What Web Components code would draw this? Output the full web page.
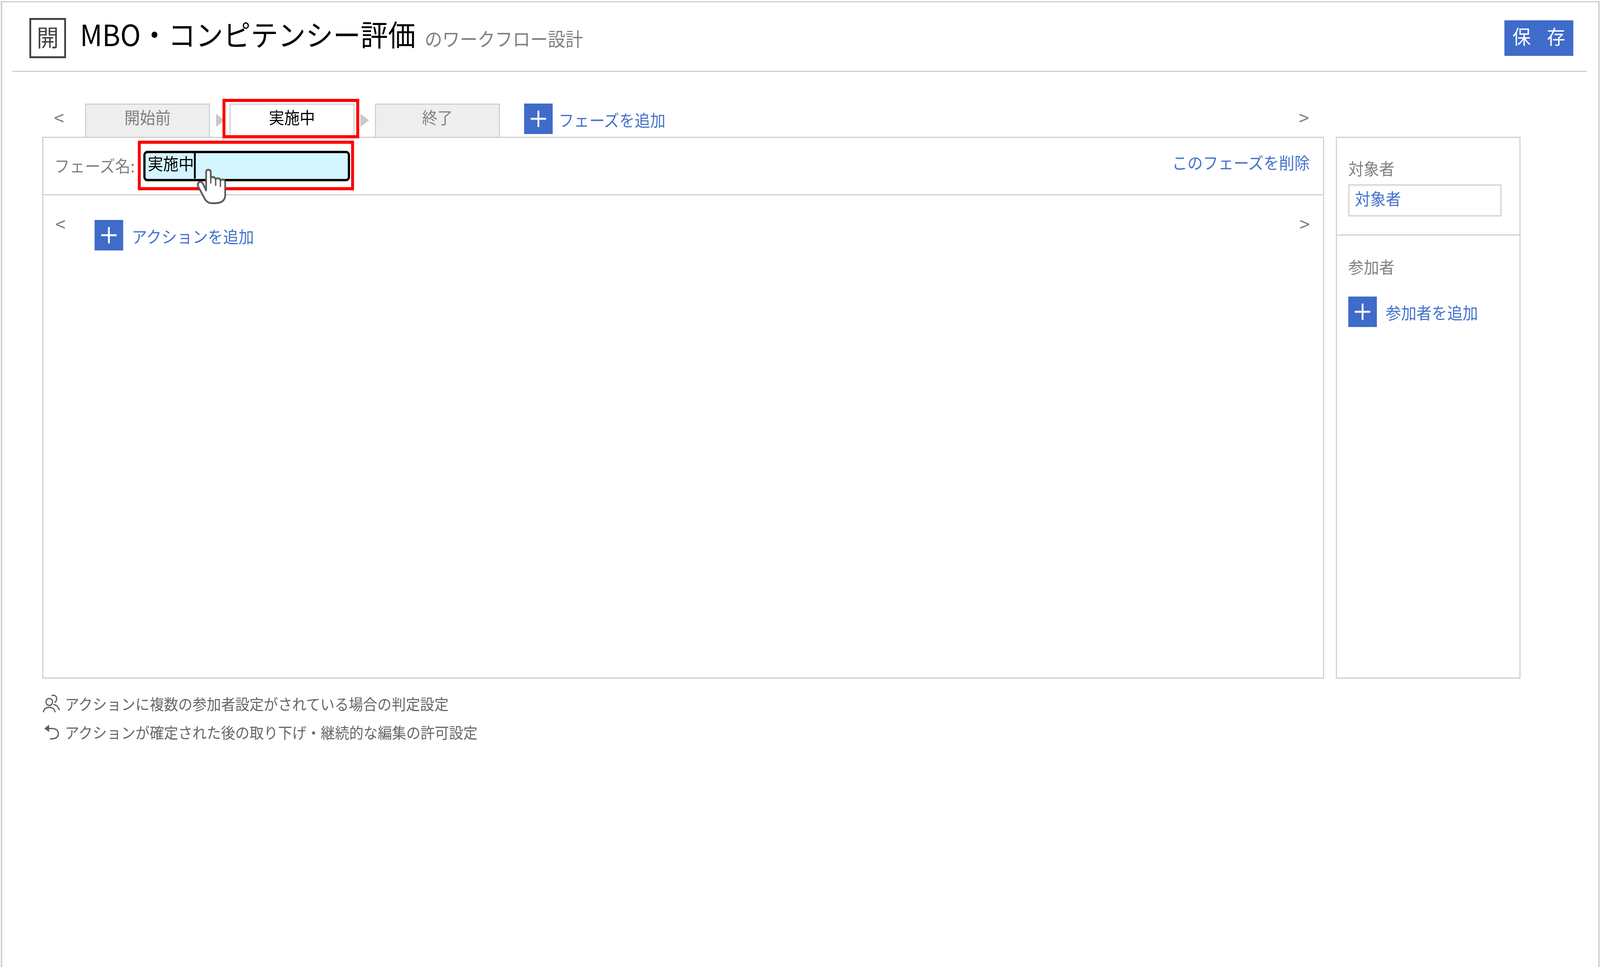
<!DOCTYPE html>
<html lang="ja">
<head>
<meta charset="utf-8">
<title>ワークフロー設計</title>
<style>
    html, body {
        margin: 0;
        background: #fff;
    }
    body {
        font-family: "Noto Sans CJK JP", "Noto Sans", sans-serif;
        font-size: 42px;
        line-height: 1.2;
        color: #808080;
    }
</style>
</head>
<body>
<wf-page>
    <wf-header slot="header">
        <span slot="logo">開</span>
        <span slot="title">MBO・コンピテンシー評価</span>
        <span slot="sub">のワークフロー設計</span>
        <span slot="save">保</span>
        <span slot="save">存</span>
    </wf-header>

    <wf-phase-tabs slot="tabs">
        <wf-tab>開始前</wf-tab>
        <wf-tab-arrow style="width: 53px;"></wf-tab-arrow>
        <wf-tab active>実施中</wf-tab>
        <wf-tab-arrow></wf-tab-arrow>
        <wf-tab>終了</wf-tab>
        <wf-add-button style="--add-gap: 16px; --add-shift: 3px; margin-left: 66px;">フェーズを追加</wf-add-button>
    </wf-phase-tabs>

    <wf-phase-panel slot="main">
        <span slot="label">フェーズ名:</span>
        <wf-name-input slot="input">実施中</wf-name-input>
        <span slot="delete">このフェーズを削除</span>
        <wf-add-button slot="add" style="--add-gap: 23px; --add-shift: 3px;">アクションを追加</wf-add-button>
    </wf-phase-panel>

    <wf-side-panel slot="side">
        <span slot="target-label">対象者</span>
        <span slot="target">対象者</span>
        <span slot="member-label">参加者</span>
        <wf-add-button slot="add" style="--add-gap: 24px; --add-shift: 1px;">参加者を追加</wf-add-button>
    </wf-side-panel>

    <wf-note slot="notes" icon="users">アクションに複数の参加者設定がされている場合の判定設定</wf-note>
    <wf-note slot="notes" icon="undo">アクションが確定された後の取り下げ・継続的な編集の許可設定</wf-note>
</wf-page>

<script>
const BLUE = "#3f6bca";
const LINK = "#4472cc";
const LINE = "#cfcfcf";

// the design is 4366 wide, the window may come out narrower
const FIT_X = Math.min(1, window.innerWidth / 4366);

class WfPage extends HTMLElement {
    constructor() {
        super();
        this.shadowDOM = this.attachShadow({mode: "open"});
    }

    connectedCallback() {
        this.shadowDOM.innerHTML = `
            <style>
                :host {
                    display: block;
                    box-sizing: border-box;
                    width: 4363px;
                    height: 2472px;
                    margin: 3px 0 0 ${3 * FIT_X - 0.5}px;
                    border-top: 3px solid ${LINE};
                    border-left: 4px solid ${LINE};
                    border-right: 4px solid ${LINE};
                    overflow: hidden;
                    transform: scaleX(${FIT_X});
                    transform-origin: 0 0;
                }
                .work {
                    display: grid;
                    grid-template-columns: 3498px 504px;
                    grid-template-rows: 85px 1387px;
                    column-gap: 32px;
                    margin: 81px 0 0 109px;
                }
                .tabs { grid-column: 1; grid-row: 1; }
                .notes {
                    margin: 26px 0 0 110px;
                }
            </style>
            <slot name="header"></slot>
            <div class="work">
                <div class="tabs"><slot name="tabs"></slot></div>
                <div style="grid-column: 1; grid-row: 2;"><slot name="main"></slot></div>
                <div style="grid-column: 2; grid-row: 2;"><slot name="side"></slot></div>
            </div>
            <div class="notes"><slot name="notes"></slot></div>`;
    }
}

class WfHeader extends HTMLElement {
    constructor() {
        super();
        this.shadowDOM = this.attachShadow({mode: "open"});
    }

    connectedCallback() {
        this.shadowDOM.innerHTML = `
            <style>
                :host {
                    display: flex;
                    box-sizing: border-box;
                    height: 178px;
                    margin: 0 31px 0 28px;
                    padding: 40px 37px 0 46px;
                    border-bottom: 3px solid ${LINE};
                }
                .logo {
                    box-sizing: border-box;
                    display: flex;
                    align-items: center;
                    justify-content: center;
                    width: 100px;
                    height: 103px;
                    padding-bottom: 10px;
                    border: 5px solid #444;
                    font-size: 60px;
                    line-height: 1;
                    color: #444;
                }
                .heading {
                    display: flex;
                    align-items: baseline;
                    margin: -5px 0 0 38px;
                    height: 103px;
                    gap: 25px;
                }
                .title {
                    font-size: 75px;
                    line-height: 90px;
                    color: #000;
                }
                .sub {
                    font-size: 48px;
                    color: #808080;
                }
                .save {
                    display: flex;
                    align-items: center;
                    justify-content: center;
                    gap: 44px;
                    box-sizing: border-box;
                    width: 188px;
                    height: 91px;
                    padding-bottom: 14px;
                    margin: 6px 0 0 auto;
                    background: ${BLUE};
                    color: #fff;
                    font-size: 50px;
                    line-height: 1;
                }
            </style>
            <div class="logo"><slot name="logo"></slot></div>
            <div class="heading">
                <span class="title"><slot name="title"></slot></span>
                <span class="sub"><slot name="sub"></slot></span>
            </div>
            <div class="save"><slot name="save"></slot></div>`;
    }
}

class WfPhaseTabs extends HTMLElement {
    constructor() {
        super();
        this.shadowDOM = this.attachShadow({mode: "open"});
    }

    connectedCallback() {
        this.shadowDOM.innerHTML = `
            <style>
                :host {
                    display: flex;
                    align-items: stretch;
                    box-sizing: border-box;
                    height: 85px;
                    font-size: 42px;
                }
                .prev, .next {
                    font-size: 50px;
                    line-height: 1;
                    color: #808080;
                    align-self: flex-start;
                    margin-top: 9px;
                }
                .prev { width: 117px; padding-left: 32px; box-sizing: border-box; }
                .next { margin-left: auto; margin-right: 41px; }
                ::slotted(wf-add-button) { align-self: flex-start; }
            </style>
            <span class="prev">&lt;</span>
            <slot></slot>
            <span class="next">&gt;</span>`;
    }
}

class WfTab extends HTMLElement {
    constructor() {
        super();
        this.shadowDOM = this.attachShadow({mode: "open"});
    }

    connectedCallback() {
        const active = this.hasAttribute("active");
        this.shadowDOM.innerHTML = `
            <style>
                :host {
                    position: relative;
                    display: block;
                    box-sizing: border-box;
                    width: 341px;
                    height: 85px;
                    padding-top: 6px;
                    text-align: center;
                    border: 3px solid ${LINE};
                    border-bottom: 0;
                    background: ${active ? "#fff" : "#eeeeee"};
                    color: ${active ? "#000" : "#808080"};
                    line-height: 50px;
                }
                .mark {
                    position: absolute;
                    left: -22px;
                    right: -16px;
                    top: -15px;
                    bottom: -4px;
                    border: 8px solid #ff0000;
                }
            </style>
            <slot></slot>
            ${active ? '<div class="mark"></div>' : ""}`;
    }
}

class WfTabArrow extends HTMLElement {
    constructor() {
        super();
        this.shadowDOM = this.attachShadow({mode: "open"});
    }

    connectedCallback() {
        this.shadowDOM.innerHTML = `
            <style>
                :host {
                    display: block;
                    width: 56px;
                    padding: 26px 0 0 16px;
                    box-sizing: border-box;
                }
                svg { display: block; }
            </style>
            <svg width="24" height="34" viewBox="0 0 24 34"><polygon points="0,0 24,17 0,34" fill="#c8c8c8"/></svg>`;
    }
}

class WfAddButton extends HTMLElement {
    constructor() {
        super();
        this.shadowDOM = this.attachShadow({mode: "open"});
    }

    connectedCallback() {
        this.shadowDOM.innerHTML = `
            <style>
                :host {
                    display: inline-flex;
                    align-items: center;
                    color: ${LINK};
                    font-size: 42px;
                    line-height: 50px;
                }
                .plus {
                    display: block;
                    width: 78px;
                    height: 78px;
                    flex: none;
                    margin-right: var(--add-gap, 20px);
                    background: ${BLUE};
                }
                .text { padding-top: var(--add-shift, 5px); white-space: nowrap; }
            </style>
            <svg class="plus" viewBox="0 0 78 78">
                <path d="M39 18V60M18 39H60" stroke="#fff" stroke-width="5" fill="none"/>
            </svg>
            <span class="text"><slot></slot></span>`;
    }
}

class WfHand extends HTMLElement {
    constructor() {
        super();
        this.shadowDOM = this.attachShadow({mode: "open"});
    }

    connectedCallback() {
        this.shadowDOM.innerHTML = `
            <style>
                :host {
                    position: absolute;
                    left: 137px;
                    top: 37px;
                    width: 85px;
                    height: 95px;
                    display: block;
                }
                svg { display: block; }
            </style>
            <svg width="85" height="95" viewBox="95 170 255 285">
                <path d="M180 345V205Q180 187 198 187Q218 187 218 205V250Q222 240 240 243Q255 245 258 262Q265 250 282 252Q295 254 297 270Q305 258 322 262Q336 268 336 285V380Q336 420 300 436Q270 445 220 443Q190 440 172 415L115 315Q105 295 122 282Q140 272 155 295Z" fill="#fff" stroke="#5a5a5a" stroke-width="14" stroke-linejoin="round"/>
                <path d="M218 250V292M258 262V310M297 270V318" fill="none" stroke="#5a5a5a" stroke-width="11"/>
            </svg>`;
    }
}

class WfNameInput extends HTMLElement {
    constructor() {
        super();
        this.shadowDOM = this.attachShadow({mode: "open"});
    }

    connectedCallback() {
        this.shadowDOM.innerHTML = `
            <style>
                :host {
                    position: relative;
                    display: block;
                    box-sizing: border-box;
                    width: 564px;
                    height: 78px;
                    padding: 0 0 0 6px;
                    border: 6px solid #000;
                    border-radius: 11px;
                    background: #d4f5ff;
                    color: #000;
                    font-size: 42px;
                    line-height: 50px;
                }
                .value {
                    display: inline-block;
                    box-sizing: border-box;
                    height: 65px;
                    margin-top: -2px;
                    border-right: 5px solid #000;
                }
                .mark {
                    position: absolute;
                    left: -21px;
                    right: -17px;
                    top: -32px;
                    bottom: -29px;
                    border: 8px solid #ff0000;
                }
            </style>
            <span class="value"><slot></slot></span>
            <div class="mark"></div>
            <wf-hand></wf-hand>`;
    }
}

class WfPhasePanel extends HTMLElement {
    constructor() {
        super();
        this.shadowDOM = this.attachShadow({mode: "open"});
    }

    connectedCallback() {
        this.shadowDOM.innerHTML = `
            <style>
                :host {
                    display: block;
                    box-sizing: border-box;
                    height: 1387px;
                    border: 3px solid ${LINE};
                    font-size: 42px;
                }
                .bar {
                    display: flex;
                    align-items: center;
                    box-sizing: border-box;
                    height: 147px;
                    padding: 0 36px 0 30px;
                    border-bottom: 3px solid ${LINE};
                }
                .label {
                    width: 243px;
                    margin-top: -4px;
                    white-space: nowrap;
                }
                .delete {
                    margin: -20px 0 0 auto;
                    color: ${LINK};
                }
                .actions {
                    display: flex;
                    align-items: flex-start;
                    padding: 63px 36px 0 33px;
                }
                .prev, .next {
                    font-size: 50px;
                    line-height: 1;
                    color: #808080;
                    margin-top: -17px;
                }
                .prev { width: 107px; }
                .next { margin-left: auto; }
            </style>
            <div class="bar">
                <span class="label"><slot name="label"></slot></span>
                <slot name="input"></slot>
                <span class="delete"><slot name="delete"></slot></span>
            </div>
            <div class="actions">
                <span class="prev">&lt;</span>
                <slot name="add"></slot>
                <span class="next">&gt;</span>
            </div>`;
    }
}

class WfSidePanel extends HTMLElement {
    constructor() {
        super();
        this.shadowDOM = this.attachShadow({mode: "open"});
    }

    connectedCallback() {
        this.shadowDOM.innerHTML = `
            <style>
                :host {
                    display: block;
                    box-sizing: border-box;
                    height: 1387px;
                    border: 3px solid ${LINE};
                    font-size: 42px;
                }
                .target {
                    box-sizing: border-box;
                    height: 250px;
                    padding: 52px 0 0 31px;
                    border-bottom: 3px solid ${LINE};
                }
                .target-label, .member-label {
                    display: block;
                    line-height: 50px;
                }
                .box {
                    box-sizing: border-box;
                    width: 418px;
                    height: 82px;
                    margin-top: 17px;
                    padding: 7px 0 0 15px;
                    border: 3px solid ${LINE};
                    color: ${LINK};
                    line-height: 50px;
                }
                .members {
                    padding: 54px 0 0 31px;
                }
                .member-label { margin-bottom: 52px; }
            </style>
            <div class="target">
                <span class="target-label"><slot name="target-label"></slot></span>
                <div class="box"><slot name="target"></slot></div>
            </div>
            <div class="members">
                <span class="member-label"><slot name="member-label"></slot></span>
                <slot name="add"></slot>
            </div>`;
    }
}

class WfNote extends HTMLElement {
    constructor() {
        super();
        this.shadowDOM = this.attachShadow({mode: "open"});
    }

    icon() {
        if (this.getAttribute("icon") === "users") {
            return `<svg width="49" height="50" viewBox="20 20 147 150">
                <circle cx="75" cy="85" r="27"/>
                <path d="M27 160C35 115 115 115 122 160M97 35C130 25 150 60 122 88M112 105C135 108 150 125 157 145"/>
            </svg>`;
        }
        return `<svg width="42" height="42" viewBox="30 250 126 126" style="margin: 3px 0 0 3px;">
            <polygon points="35,285 75,255 75,312" fill="#5f5f5f" stroke="none"/>
            <path d="M70 285H105Q150 290 150 325Q150 365 85 365"/>
        </svg>`;
    }

    connectedCallback() {
        this.shadowDOM.innerHTML = `
            <style>
                :host {
                    display: flex;
                    align-items: center;
                    height: 73px;
                    color: #666;
                    font-size: 38.9px;
                    line-height: 50px;
                    white-space: nowrap;
                }
                .icon { width: 61px; flex: none; }
                svg {
                    display: block;
                    fill: none;
                    stroke: #5f5f5f;
                    stroke-width: 10;
                    stroke-linecap: round;
                }
            </style>
            <div class="icon">${this.icon()}</div>
            <slot></slot>`;
    }
}

customElements.define("wf-page", WfPage);
customElements.define("wf-header", WfHeader);
customElements.define("wf-phase-tabs", WfPhaseTabs);
customElements.define("wf-tab", WfTab);
customElements.define("wf-tab-arrow", WfTabArrow);
customElements.define("wf-add-button", WfAddButton);
customElements.define("wf-hand", WfHand);
customElements.define("wf-name-input", WfNameInput);
customElements.define("wf-phase-panel", WfPhasePanel);
customElements.define("wf-side-panel", WfSidePanel);
customElements.define("wf-note", WfNote);
</script>
</body>
</html>
